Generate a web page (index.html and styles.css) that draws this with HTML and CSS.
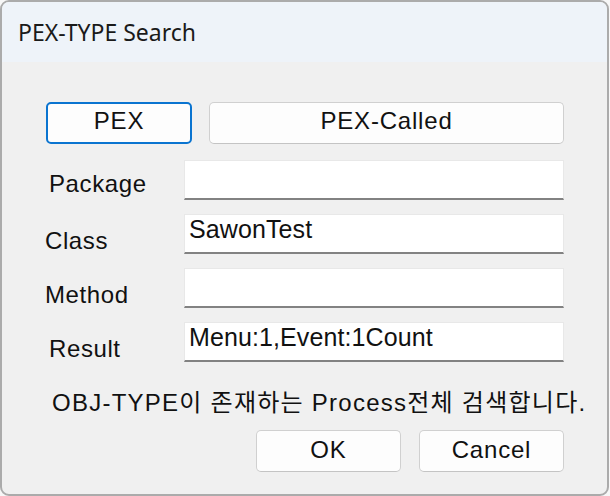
FILE: index.html
```html
<!DOCTYPE html>
<html lang="ko">
<head>
<meta charset="utf-8">
<title>PEX-TYPE Search</title>
<link rel="stylesheet" href="styles.css">
</head>
<body>
<div class="window">
  <div class="titlebar"><span class="title">PEX-TYPE Search</span></div>
  <div class="content">
    <div class="mode-row">
      <button class="btn btn-primary btn-pex">PEX</button>
      <button class="btn btn-called">PEX-Called</button>
    </div>
    <div class="form">
      <div class="row">
        <span class="label label-inset label-raised">Package</span>
        <div class="field"></div>
      </div>
      <div class="row">
        <span class="label">Class</span>
        <div class="field">SawonTest</div>
      </div>
      <div class="row">
        <span class="label">Method</span>
        <div class="field"></div>
      </div>
      <div class="row">
        <span class="label label-inset">Result</span>
        <div class="field">Menu:1,Event:1Count</div>
      </div>
    </div>
    <p class="message">OBJ-TYPE이 존재하는 Process전체 검색합니다.</p>
    <div class="actions">
      <button class="btn btn-action">OK</button>
      <button class="btn btn-action">Cancel</button>
    </div>
  </div>
</div>
</body>
</html>
```
FILE: styles.css
```css
html, body {
  margin: 0;
  padding: 0;
  width: 610px;
  height: 496px;
  background: #f7f7f7;
  overflow: hidden;
}

.window {
  width: 609px;
  height: 496px;
  box-sizing: border-box;
  border: 2px solid #ababab;
  border-radius: 9px;
  background: #f0f0f0;
  overflow: hidden;
  display: flex;
  flex-direction: column;
}

.titlebar {
  height: 60px;
  flex: none;
  background: #eef3f9;
  padding-left: 16px;
  box-sizing: border-box;
}

.title {
  display: block;
  font-family: "Noto Sans", "Open Sans", sans-serif;
  font-size: 23px;
  line-height: 30px;
  padding-top: 15px;
  color: #1a1a1a;
}

.content {
  padding: 0 43px 0 44px;
  font-family: "Liberation Sans", "Noto Sans CJK KR", sans-serif;
  color: #111;
}

.mode-row {
  display: flex;
  gap: 17px;
  margin-top: 40px;
}

.btn {
  height: 42px;
  box-sizing: border-box;
  background: #fdfdfd;
  border: 1px solid #d0d0d0;
  border-bottom-color: #c4c4c4;
  border-radius: 5px;
  font-family: "Liberation Sans", "Noto Sans CJK KR", sans-serif;
  font-size: 24px;
  letter-spacing: 0.8px;
  color: #111;
  padding: 0 0 4px 0;
  line-height: 1;
}

.btn-primary {
  border: 2px solid #0a74d0;
}

.btn-pex {
  width: 146px;
}

.btn-called {
  flex: 1;
}

.form {
  margin-top: 16px;
  display: flex;
  flex-direction: column;
  gap: 14px;
}

.row {
  display: grid;
  grid-template-columns: 138px 380px;
  align-items: end;
  height: 40px;
}

.label {
  font-size: 24px;
  line-height: 26px;
  letter-spacing: 0.6px;
  margin-left: -1px;
}

.label-inset {
  margin-left: 3px;
}

.label-raised {
  margin-bottom: 3px;
}

.field {
  height: 40px;
  box-sizing: border-box;
  background: #ffffff;
  border: 1px solid #e8e8e8;
  border-bottom: 2px solid #828282;
  font-size: 25px;
  line-height: 28px;
  letter-spacing: 0.1px;
  padding-left: 4px;
}

.message {
  margin: 27px 0 0 6px;
  font-size: 24px;
  line-height: 28px;
  letter-spacing: 1.25px;
  white-space: nowrap;
}

.actions {
  display: flex;
  justify-content: flex-end;
  gap: 18px;
  margin-top: 13px;
}

.btn-action {
  width: 145px;
  padding-bottom: 2px;
}
```
